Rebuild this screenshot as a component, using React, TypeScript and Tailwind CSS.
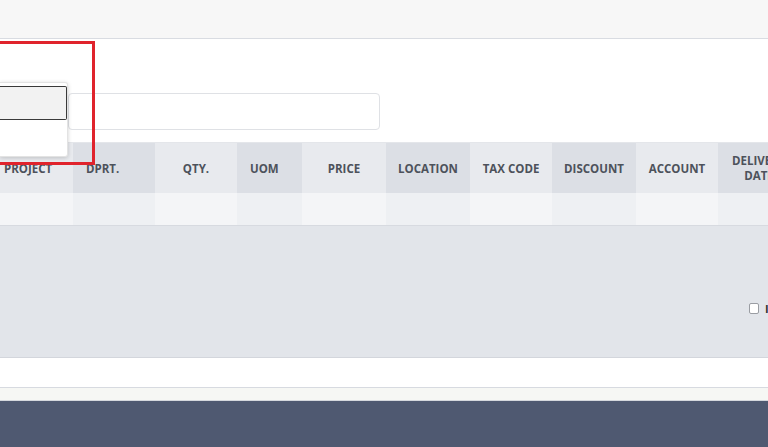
import React from "react";

type Col = { label: string; w: string; dark: boolean; align: string };

const cols: Col[] = [
  { label: "PROJECT", w: "w-[73px]", dark: false, align: "justify-start pl-[4px]" },
  { label: "DPRT.", w: "w-[82px]", dark: true, align: "justify-start pl-[13px]" },
  { label: "QTY.", w: "w-[82px]", dark: false, align: "justify-center" },
  { label: "UOM", w: "w-[65px]", dark: true, align: "justify-start pl-[13px]" },
  { label: "PRICE", w: "w-[84px]", dark: false, align: "justify-center" },
  { label: "LOCATION", w: "w-[84px]", dark: true, align: "justify-center" },
  { label: "TAX CODE", w: "w-[82px]", dark: false, align: "justify-center" },
  { label: "DISCOUNT", w: "w-[84px]", dark: true, align: "justify-center" },
  { label: "ACCOUNT", w: "w-[82px]", dark: false, align: "justify-center" },
  { label: "DELIVERY DATE", w: "w-[82px]", dark: true, align: "justify-center text-center" },
];

const App: React.FC = () => {
  return (
    <div
      className="w-[768px] h-[447px] overflow-hidden flex flex-col bg-[#f7f7f7]"
      style={{ fontFamily: '"Open Sans", "Liberation Sans", sans-serif' }}
    >
      {/* 상단 여백 */}
      <div className="h-[39px] shrink-0 bg-[#f7f7f7] border-b border-[#d9dce2]" />

      {/* 본문 패널 */}
      <div className="relative flex flex-col bg-white shrink-0">
        {/* 입력 영역 */}
        <div className="h-[103px] pt-[54px] pl-[68px]">
          <div className="w-[312px] h-[37px] border border-[#dfe1e5] rounded-[4px] bg-white" />
        </div>

        {/* 테이블 헤더 */}
        <div className="flex h-[51px] border-t border-[#e4e6ea]">
          {cols.map((c) => (
            <div
              key={c.label}
              className={`${c.w} shrink-0 flex items-center ${c.align} ${
                c.dark ? "bg-[#dcdfe5]" : "bg-[#e8eaee]"
              }`}
            >
              <span className="text-[11.5px] font-bold leading-[15px] text-[#4d525b] whitespace-pre-line">
                {c.label === "DELIVERY DATE" ? "DELIVERY\nDATE" : c.label}
              </span>
            </div>
          ))}
        </div>

        {/* 빈 행 */}
        <div className="flex h-[33px] border-b border-[#d7dae0]">
          {cols.map((c) => (
            <div
              key={c.label}
              className={`${c.w} shrink-0 ${c.dark ? "bg-[#eef0f3]" : "bg-[#f4f5f7]"}`}
            />
          ))}
        </div>

        {/* 하단 회색 영역 */}
        <div className="h-[132px] bg-[#e2e5ea] border-b border-[#d3d6dc] flex items-center justify-end pt-[34px] overflow-hidden">
          <div className="flex items-center gap-[6px] w-[19px] shrink-0">
            <div className="w-[10px] h-[11px] shrink-0 border border-[#9a9da3] rounded-[2px] bg-white" />
            <span className="text-[11px] font-bold text-[#333] leading-none whitespace-nowrap">I</span>
          </div>
        </div>

        <div className="h-[30px] bg-white border-b border-[#d7dae0]" />

        {/* 드롭다운 */}
        <div className="absolute left-0 top-[43px] w-[68px] h-[75px] bg-white rounded-r-[3px] shadow-[0_1px_4px_rgba(0,0,0,0.18)] border border-l-0 border-[#e3e3e3] pt-[3px]">
          <div className="h-[34px] w-[67px] border border-l-0 border-[#3a3a3a] bg-[#f2f2f2] rounded-r-[2px]" />
        </div>

        {/* 강조 박스 */}
        <div className="absolute -left-[10px] top-[2px] w-[105px] h-[124px] border-[3px] border-[#e0232c] pointer-events-none" />
      </div>

      <div className="h-[13px] shrink-0 bg-[#f6f7f4] border-b border-[#d5d8dd]" />

      {/* 하단 바 */}
      <div className="flex-1 bg-[#4f5971]" />
    </div>
  );
};

export default App;
